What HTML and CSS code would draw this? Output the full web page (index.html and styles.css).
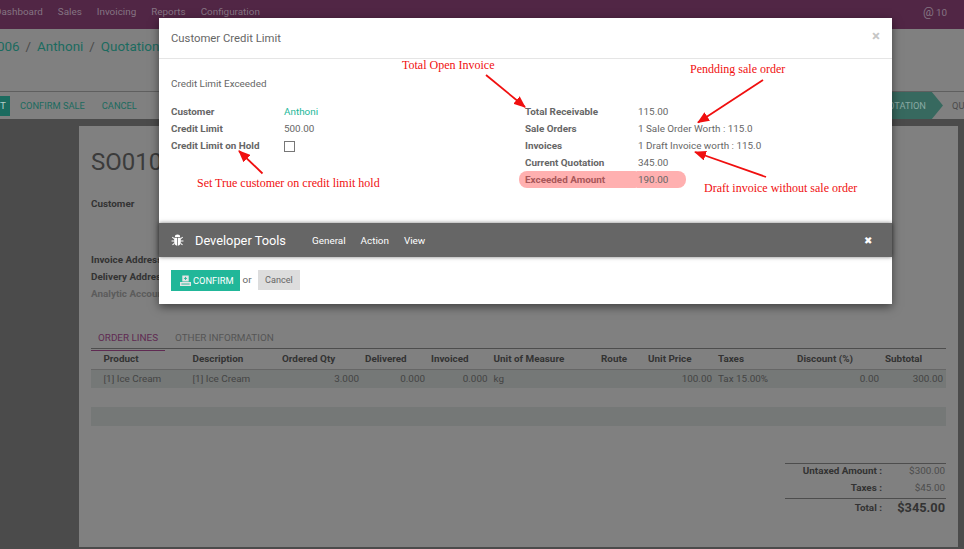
FILE: index.html
```html
<!DOCTYPE html>
<html lang="en">
<head>
    <meta charset="UTF-8">
    <meta name="viewport" content="width=device-width, initial-scale=1.0">
    <title>Customer Credit Limit</title>
    <link rel="stylesheet" href="styles.css">
</head>
<body>
    <!-- page behind the dialog, colours already dimmed by the backdrop -->
    <header class="navbar">
        <nav class="menu">
            <span>Dashboard</span>
            <span>Sales</span>
            <span>Invoicing</span>
            <span>Reports</span>
            <span>Configuration</span>
        </nav>
        <span class="mail">@<span class="mail-count">10</span></span>
    </header>

    <section class="control-panel">
        <div class="breadcrumb">
            <span>006</span><i>/</i><span>Anthoni</span><i>/</i><span>Quotation</span>
        </div>
        <div class="actions">
            <span class="btn-edit">T</span>
            <span class="btn-link">CONFIRM SALE</span>
            <span class="btn-link">CANCEL</span>
            <div class="status">
                <span class="status-current">QUOTATION</span>
                <span class="status-next">QUOTATION SENT</span>
            </div>
        </div>
    </section>

    <main class="content">
        <div class="sheet">
            <h1 class="so-name">SO0106</h1>
            <div class="so-label">Customer</div>
            <div class="so-label so-invoice">Invoice Address</div>
            <div class="so-label">Delivery Address</div>
            <div class="so-label so-muted">Analytic Account</div>

            <div class="tabs">
                <span class="tab tab-active">ORDER LINES</span>
                <span class="tab">OTHER INFORMATION</span>
            </div>

            <table class="lines">
                <colgroup>
                    <col class="c1"><col class="c2"><col class="c3"><col class="c4"><col class="c5"><col class="c6">
                    <col class="c7"><col class="c8"><col class="c9"><col class="c10"><col class="c11">
                </colgroup>
                <thead>
                    <tr>
                        <th>Product</th>
                        <th>Description</th>
                        <th>Ordered Qty</th>
                        <th>Delivered</th>
                        <th>Invoiced</th>
                        <th>Unit of Measure</th>
                        <th>Route</th>
                        <th>Unit Price</th>
                        <th>Taxes</th>
                        <th>Discount (%)</th>
                        <th>Subtotal</th>
                    </tr>
                </thead>
                <tbody>
                    <tr>
                        <td>[1] Ice Cream</td>
                        <td>[1] Ice Cream</td>
                        <td class="num">3.000</td>
                        <td class="num">0.000</td>
                        <td class="num">0.000</td>
                        <td>kg</td>
                        <td></td>
                        <td class="num">100.00</td>
                        <td>Tax 15.00%</td>
                        <td class="num">0.00</td>
                        <td class="num">300.00</td>
                    </tr>
                </tbody>
            </table>
            <div class="band"></div>

            <div class="totals">
                <span class="t-label">Untaxed Amount :</span><span class="t-value">$300.00</span>
                <span class="t-label">Taxes :</span><span class="t-value">$45.00</span>
                <span class="t-label t-sum">Total :</span><span class="t-value t-sum t-big">$345.00</span>
            </div>
        </div>
    </main>

    <div class="modal">
        <div class="modal-header">
            <span class="modal-title">Customer Credit Limit</span>
            <span class="modal-close">×</span>
        </div>
        <div class="modal-body">
            <p class="modal-msg">Credit Limit Exceeded</p>
            <div class="form-cols">
                <dl class="fields">
                    <dt>Customer</dt><dd class="link">Anthoni</dd>
                    <dt>Credit Limit</dt><dd>500.00</dd>
                    <dt>Credit Limit on Hold</dt><dd><span class="checkbox"></span></dd>
                </dl>
                <dl class="fields">
                    <dt>Total Receivable</dt><dd>115.00</dd>
                    <dt>Sale Orders</dt><dd>1 Sale Order Worth : 115.0</dd>
                    <dt>Invoices</dt><dd>1 Draft Invoice worth : 115.0</dd>
                    <dt>Current Quotation</dt><dd>345.00</dd>
                    <dt class="over">Exceeded Amount</dt><dd class="over">190.00</dd>
                </dl>
            </div>
        </div>
        <div class="dev-bar">
            <svg class="bug" viewBox="0 0 14 14" width="13" height="13">
                <path fill="#fff" d="M4.2 3.2a2.8 2.6 0 0 1 5.6 0z"/>
                <path fill="#fff" d="M3.4 4h3.2v8.6C4.6 12.4 3.4 10.6 3.4 8.6zM7.4 4h3.2v4.6c0 2-1.2 3.8-3.2 4z"/>
                <path stroke="#fff" stroke-width="1.1" fill="none" d="M3.4 5 1.4 3.4M10.6 5l2-1.6M3.2 7.6H.6M10.8 7.6h2.6M3.6 10l-2 1.8M10.4 10l2 1.8"/>
            </svg>
            <span class="dev-title">Developer Tools</span>
            <span class="dev-item">General</span>
            <span class="dev-item">Action</span>
            <span class="dev-item">View</span>
            <span class="dev-close">✖</span>
        </div>
        <div class="modal-footer">
            <span class="btn-confirm">
                <svg viewBox="0 0 12 12" width="11" height="12">
                    <path fill="#e4e4e4" d="M2.5 0h7v6.5h-7zM0 7h12v4.5H0z"/>
                    <path stroke="#21b799" stroke-width="1" d="M6 1.5v3.4M4.3 3.2h3.4M1.5 9.3h9"/>
                </svg>
                CONFIRM
            </span>
            <span class="or">or</span>
            <span class="btn-cancel">Cancel</span>
        </div>
    </div>

    <!-- red notes drawn on the screenshot -->
    <div class="notes">
        <svg class="arrows" viewBox="0 0 964 549" width="964" height="549">
            <defs>
                <marker id="head" markerUnits="userSpaceOnUse" markerWidth="12" markerHeight="10" refX="11" refY="5" orient="auto">
                    <path d="M0 0 12 5 0 10z" fill="#f00f0f"/>
                </marker>
            </defs>
            <g stroke="#f00f0f" stroke-width="1.8">
                <line x1="262.5" y1="173.5" x2="239" y2="151" marker-end="url(#head)"/>
                <line x1="486" y1="75" x2="525" y2="107" marker-end="url(#head)"/>
                <line x1="763" y1="80" x2="698" y2="122.5" marker-end="url(#head)"/>
                <line x1="766" y1="177" x2="695" y2="152" marker-end="url(#head)"/>
            </g>
        </svg>
        <span class="note note-open">Total Open Invoice</span>
        <span class="note note-pending">Pendding sale order</span>
        <span class="note note-hold">Set True customer on credit limit hold</span>
        <span class="note note-draft">Draft invoice without sale order</span>
    </div>
</body>
</html>
```

FILE: styles.css
```css
:root {
    --nav-color: #512645;
    --panel-color: #808080;
    --back-color: #4b4b4b;
    --text-dim: #333;
    --teal-dim: #1b6b5f;
    --text-color: #666;
    --teal: #21b799;
}

* {
    box-sizing: border-box;
    margin: 0;
    padding: 0;
}

html, body {
    height: 100%;
}

body {
    position: relative;
    overflow: hidden;
    background-color: var(--back-color);
    font-family: Roboto, 'Open Sans', sans-serif;
    font-size: 9.9px;
    color: var(--text-dim);
}

/* top bar */
.navbar {
    display: flex;
    justify-content: space-between;
    height: 29px;
    padding-top: 5px;
    background-color: var(--nav-color);
    color: #857583;
    line-height: 14px;
    box-shadow: 0 1px 2px rgba(0, 0, 0, 0.4);
}

.menu {
    display: flex;
    gap: 15px;
    margin-left: -5px;
}

.mail {
    margin-right: 17px;
    font-size: 12px;
}

.mail-count {
    margin-left: 2px;
    font-size: 9.9px;
}

/* breadcrumb and buttons */
.control-panel {
    height: 90px;
    background-color: var(--panel-color);
}

.breadcrumb {
    display: flex;
    height: 62px;
    padding-top: 8px;
    margin-left: -3px;
    color: var(--teal-dim);
    font-size: 13.4px;
    line-height: 19px;
}

.breadcrumb i {
    margin: 0 6px;
    font-style: normal;
    color: #4a4a4a;
}

.actions {
    display: flex;
    align-items: center;
    height: 28px;
    border-top: 1px solid #5f5f5f;
}

.btn-edit {
    flex: none;
    width: 10px;
    height: 20px;
    margin-right: 10px;
    padding-right: 7px;
    background-color: var(--teal-dim);
    color: #b5cdc8;
    line-height: 20px;
    text-align: right;
}

.btn-link {
    margin-right: 17px;
    color: var(--teal-dim);
    font-size: 9.3px;
}

.status {
    display: flex;
    align-items: center;
    flex: none;
    width: 160px;
    height: 100%;
    margin-left: auto;
    overflow: hidden;
    white-space: nowrap;
    color: #4a4a4a;
    font-size: 9.3px;
}

.status-current {
    flex: none;
    width: 139px;
    height: 100%;
    padding-right: 17px;
    background-color: #37695f;
    color: #8aa9a3;
    line-height: 27px;
    text-align: right;
    clip-path: polygon(0 0, 92% 0, 100% 50%, 92% 100%, 0 100%);
}

.status-next {
    margin-left: 9px;
}

/* form behind the dialog */
.content {
    padding-top: 7px;
}

.sheet {
    height: 421px;
    margin: 0 6px 0 79px;
    padding: 0 12px;
    background-color: #808080;
}

.so-name {
    height: 69px;
    padding-top: 21px;
    font-size: 24px;
    font-weight: 400;
    line-height: 30px;
    color: #3b3b3b;
}

.so-label {
    height: 17px;
    font-weight: 700;
    line-height: 17px;
    white-space: nowrap;
}

.so-invoice {
    margin-top: 39px;
}

.so-muted {
    color: #5c5c5c;
}

.tabs {
    display: flex;
    height: 22px;
    margin-top: 25px;
    padding-top: 3px;
    gap: 3px;
    border-bottom: 1px solid #4d4d4d;
}

.tab {
    height: 21px;
    padding: 0 7px;
    color: #555;
    line-height: 16px;
}

.tab-active {
    border-bottom: 1px solid #5f2a52;
    color: #5f2a52;
}

.lines {
    width: 855px;
    border-collapse: collapse;
    table-layout: fixed;
}

.c1 { width: 98.5px; }
.c2 { width: 89.5px; }
.c3 { width: 83px; }
.c4 { width: 66px; }
.c5 { width: 62.5px; }
.c6 { width: 107.5px; }
.c7 { width: 47px; }
.c8 { width: 70px; }
.c9 { width: 79px; }
.c10 { width: 88px; }
.c11 { width: 64px; }

.lines th,
.lines td {
    height: 20px;
    padding: 0 3px;
    line-height: 19px;
    text-align: left;
    white-space: nowrap;
}

.lines th {
    border-bottom: 1px solid #666;
    font-weight: 700;
}

.lines td {
    height: 18px;
    background-color: #757877;
    color: #444;
    line-height: 18px;
}

.lines th:first-child,
.lines td:first-child {
    padding-left: 12.5px;
}

.lines td.num {
    text-align: right;
}

.band {
    height: 19px;
    margin-top: 19px;
    background-color: #757877;
}

.totals {
    display: grid;
    grid-template-columns: 97px 1fr;
    row-gap: 4px;
    width: 161px;
    margin: 37px 0 0 auto;
    border-top: 1px solid #4d4d4d;
    line-height: 13px;
}

.t-label {
    font-weight: 700;
    text-align: right;
}

.t-value {
    padding-right: 1px;
    color: #4d4d4d;
    text-align: right;
}

.t-sum {
    border-top: 1px solid #4d4d4d;
    line-height: 18px;
}

.t-big {
    color: #333;
    font-size: 12.8px;
    font-weight: 700;
}

/* dialog */
.modal {
    position: absolute;
    top: 18px;
    left: 159px;
    display: flex;
    flex-direction: column;
    width: 733px;
    height: 286px;
    background-color: #fff;
    color: var(--text-color);
    box-shadow: 0 3px 9px rgba(0, 0, 0, 0.5);
}

.modal-header {
    display: flex;
    justify-content: space-between;
    align-items: center;
    height: 41px;
    padding: 0 12px;
    border-bottom: 1px solid #e5e5e5;
}

.modal-title {
    font-size: 11.3px;
}

.modal-close {
    margin-bottom: 5px;
    color: #c6c6c6;
    font-size: 15px;
    font-weight: 700;
}

.modal-body {
    flex: 1;
    padding: 16px 12px 0;
}

.modal-msg {
    margin-bottom: 11px;
    line-height: 17px;
}

.form-cols {
    display: grid;
    grid-template-columns: 354px 1fr;
}

.fields {
    display: grid;
    grid-template-columns: 113px 1fr;
    grid-auto-rows: 17px;
    line-height: 17px;
}

.fields dt {
    font-weight: 700;
}

.fields .link {
    color: var(--teal);
}

.checkbox {
    display: block;
    width: 11px;
    height: 11px;
    margin-top: 4px;
    border: 1px solid #777;
}

.over {
    background-color: #ffb0b0;
    border-radius: 8px;
}

dt.over {
    margin: 0 -5px 0 -6px;
    padding-left: 6px;
    color: #a8575a;
}

dd.over {
    width: 49px;
    margin-left: -1px;
    padding-left: 1px;
    border-radius: 0 8px 8px 0;
}

.dev-bar {
    display: flex;
    align-items: center;
    flex: none;
    height: 34px;
    padding: 0 20px 0 12px;
    background-color: #666;
    color: #fff;
    box-shadow: 0 0 4px rgba(0, 0, 0, 0.5);
}

.bug {
    margin-right: 11px;
}

.dev-title {
    margin-right: 26px;
    font-size: 12.8px;
}

.dev-item {
    margin-right: 15px;
}

.dev-close {
    margin: 0 0 0 auto;
    font-size: 10px;
}

.modal-footer {
    display: flex;
    align-items: flex-start;
    flex: none;
    height: 47px;
    padding-top: 13px;
}

.btn-confirm {
    display: flex;
    align-items: center;
    gap: 2px;
    height: 21px;
    margin-left: 12px;
    padding: 0 6px 0 9px;
    background-color: var(--teal);
    color: #fff;
    font-size: 9.3px;
}

.or {
    margin: 0 6px 0 3px;
    line-height: 20px;
}

.btn-cancel {
    height: 20px;
    padding: 0 7.5px;
    background-color: #ddd;
    font-size: 9.1px;
    line-height: 20px;
}

/* annotations */
.notes {
    position: absolute;
    inset: 0;
    font-family: 'Liberation Serif', serif;
    font-size: 12px;
    color: #f00f0f;
}

.arrows {
    position: absolute;
    inset: 0;
}

.note {
    position: absolute;
    line-height: 14px;
    white-space: nowrap;
}

.note-open { left: 402px; top: 58px; }
.note-pending { left: 690px; top: 62px; }
.note-hold { left: 197px; top: 176px; }
.note-draft { left: 704px; top: 181px; }
```
